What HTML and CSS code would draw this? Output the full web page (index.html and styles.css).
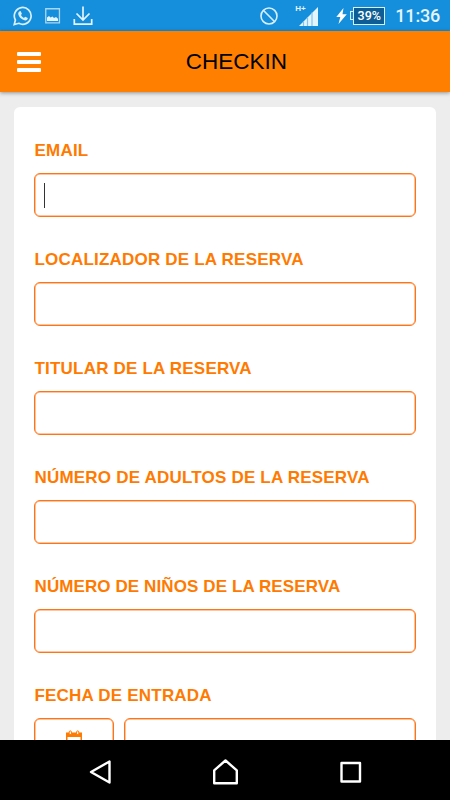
FILE: index.html
```html
<!DOCTYPE html>
<html lang="es">
<head>
    <meta charset="UTF-8">
    <meta name="viewport" content="width=device-width, initial-scale=1.0">
    <title>Checkin</title>
    <link rel="stylesheet" href="styles.css">
</head>
<body>

    <!-- Status bar -->
    <div class="status-bar">
        <div class="status-left">
            <svg width="20" height="20" viewBox="0 0 20 20" fill="none" stroke="#d9effc">
                <path d="M1.2 18.6 2.4 14A8.4 8.4 0 1 1 5.8 17.3Z" stroke-width="1.7"/>
                <path d="M6.2 5.5 7.6 5l1.3 2.8-.9 1.3c.7 1.3 1.6 2.1 2.9 2.8l1.3-1.1 2.6 1.3c0 1.6-1.3 2.4-2.6 2.3C8.7 14 5.4 10.5 5.2 7.5c0-.8.4-1.5 1-2z" fill="#d9effc" stroke="none"/>
            </svg>
            <svg class="icon-image" width="16" height="16" viewBox="0 0 16 16">
                <path d="M.75.75h13.7v14.2H.75z" fill="none" stroke="#a9d8f6" stroke-width="1.3"/>
                <path d="M2 13V9.5L4 8l1.5 1.5 2-1L9 10l2-1 2 1.8V13z" fill="#e4f4fd"/>
            </svg>
            <svg class="icon-download" width="20" height="20" viewBox="0 0 20 20" fill="none" stroke="#e4f4fd" stroke-width="1.7">
                <path d="M10 .5V14M3.5 7.5 10 14l6.5-6.5M1.3 13v5.2h17.4V13"/>
            </svg>
        </div>
        <div class="status-right">
            <svg class="icon-block" width="18" height="18" viewBox="0 0 18 18" fill="none" stroke="#d9effc" stroke-width="1.6">
                <circle cx="9" cy="9" r="8"/>
                <path d="M3.3 3.3 14.7 14.7"/>
            </svg>
            <div class="signal">
                <span class="signal-type">H+</span>
                <svg width="19" height="19" viewBox="0 0 19 19">
                    <path d="M19 0v19H0z" fill="#e4f4fd"/>
                    <path d="M4.5 14V19M8.5 10V19M13 5.5V19" stroke="#7fc3ee" stroke-width="1.2"/>
                </svg>
            </div>
            <svg class="icon-bolt" width="11" height="16" viewBox="0 0 11 16">
                <path d="M7.5 0 .3 9h4L2.5 16 10.8 6.2H6.5z" fill="#fff"/>
            </svg>
            <div class="battery-wrap">
                <span class="battery-tip"></span>
                <div class="battery">39%</div>
            </div>
            <span class="clock">11:36</span>
        </div>
    </div>

    <!-- App header -->
    <header class="header">
        <div class="menu">
            <span></span>
            <span></span>
            <span></span>
        </div>
        <h1>CHECKIN</h1>
    </header>

    <!-- Form -->
    <main class="content">
        <form class="card">
            <div class="field">
                <label>EMAIL</label>
                <div class="input"><span class="cursor"></span></div>
            </div>
            <div class="field">
                <label>LOCALIZADOR DE LA RESERVA</label>
                <div class="input"></div>
            </div>
            <div class="field">
                <label>TITULAR DE LA RESERVA</label>
                <div class="input"></div>
            </div>
            <div class="field">
                <label>NÚMERO DE ADULTOS DE LA RESERVA</label>
                <div class="input"></div>
            </div>
            <div class="field">
                <label class="tight">NÚMERO DE NIÑOS DE LA RESERVA</label>
                <div class="input"></div>
            </div>
            <div class="field">
                <label>FECHA DE ENTRADA</label>
                <div class="date-row">
                    <div class="input date-button">
                        <svg width="16" height="18" viewBox="0 0 16 18">
                            <path d="M0 2.5h16V18H0zM1.5 7v9.5h13V7z" fill="#ff7a00" fill-rule="evenodd"/>
                            <path d="M3.2 4.6V2a1.1 1.1 0 0 1 2.2 0v2.6zM10.6 4.6V2a1.1 1.1 0 0 1 2.2 0v2.6z" fill="#fff" stroke="#ff7a00"/>
                        </svg>
                    </div>
                    <div class="input"></div>
                </div>
            </div>
        </form>
    </main>

    <!-- Navigation bar -->
    <nav class="nav-bar">
        <svg width="22" height="24" viewBox="0 0 22 24">
            <path d="M20.5 1.5v21L2 12z"/>
        </svg>
        <svg width="26" height="26" viewBox="0 0 26 26">
            <path d="M1.2 11.3 12.5 1.5l11.3 9.8v13H1.2z"/>
        </svg>
        <svg width="22" height="22" viewBox="0 0 22 22">
            <path d="M1.5 2h18.5v18.5H1.5z"/>
        </svg>
    </nav>

</body>
</html>
```

FILE: styles.css
```css
* {
    box-sizing: border-box;
}

body {
    margin: 0;
    height: 100vh;
    display: flex;
    flex-direction: column;
    overflow: hidden;
    font-family: "Liberation Sans", Arial, sans-serif;
    background-color: #ededed;
}

svg {
    display: block;
    flex: none;
}

/* Status bar */
.status-bar {
    flex: none;
    height: 31px;
    display: flex;
    justify-content: space-between;
    padding: 0 10px 0 13px;
    background-color: #158fdb;
    color: #e4f4fd;
}

.status-left,
.status-right {
    display: flex;
    align-items: center;
}

.icon-image,
.icon-download {
    margin-left: 12px;
}

.icon-block {
    margin-top: 1px;
}

.signal {
    display: flex;
    margin-left: 17px;
    height: 22px;
    padding-bottom: 1px;
    align-items: flex-end;
}

.signal-type {
    width: 4px;
    align-self: flex-start;
    font-size: 8px;
    font-weight: bold;
    line-height: 7px;
}

.icon-bolt {
    margin-left: 18px;
}

.battery-wrap {
    display: flex;
    align-items: center;
    margin-left: 3px;
}

.battery-tip {
    width: 3px;
    height: 9px;
    border: 1px solid #d9effc;
    border-right: none;
}

.battery {
    width: 32px;
    height: 18px;
    border: 1px solid #d9effc;
    background-color: #0f5d95;
    color: #fff;
    font: 500 12.5px/16px Roboto, sans-serif;
    text-align: center;
}

.clock {
    margin-left: 10px;
    font: 500 18px/20px Roboto, sans-serif;
    letter-spacing: -0.2px;
}

/* Header */
.header {
    flex: none;
    height: 61px;
    display: grid;
    grid-template-columns: 60px 1fr 60px;
    align-items: center;
    background-color: #ff8000;
    box-shadow: 0 1px 4px rgba(0, 0, 0, 0.4);
    z-index: 1;
}

.menu {
    display: grid;
    gap: 4px;
    width: 24px;
    margin-left: 17px;
}

.menu span {
    height: 4px;
    border-radius: 1px;
    background-color: #fff;
}

h1 {
    margin: 0;
    padding-left: 23px;
    font-size: 22.5px;
    font-weight: normal;
    text-align: center;
    color: #000;
}

/* Form */
.content {
    flex: 1;
    min-height: 0;
    overflow: hidden;
    padding: 15px 14px 0;
}

.card {
    height: 700px;
    padding: 33px 20px 0;
    border-radius: 6px;
    background-color: #fff;
}

.field {
    height: 109.1px;
}

label {
    display: block;
    height: 33px;
    padding-left: 0.5px;
    font-size: 17px;
    font-weight: bold;
    line-height: 22px;
    letter-spacing: 0.2px;
    white-space: nowrap;
    color: #ff7a00;
}

label.tight {
    letter-spacing: 0.1px;
}

.input {
    flex: 1;
    height: 43.5px;
    padding: 9px;
    border: 1px solid #ff7413;
    border-radius: 6px;
    box-shadow: inset 0 0 0 0.5px #ff8a45;
}

.cursor {
    display: block;
    width: 1px;
    height: 25px;
    background-color: #333;
}

.date-row {
    display: flex;
    gap: 10px;
}

.date-button {
    flex: 0 0 80px;
    display: flex;
    justify-content: center;
    padding-top: 11px;
}

/* Navigation bar */
.nav-bar {
    flex: none;
    height: 60px;
    display: flex;
    justify-content: space-between;
    align-items: center;
    padding: 4px 88px 0 89px;
    background-color: #000;
}

.nav-bar path {
    fill: none;
    stroke: #fff;
    stroke-width: 2.4;
    stroke-linejoin: round;
}
```
